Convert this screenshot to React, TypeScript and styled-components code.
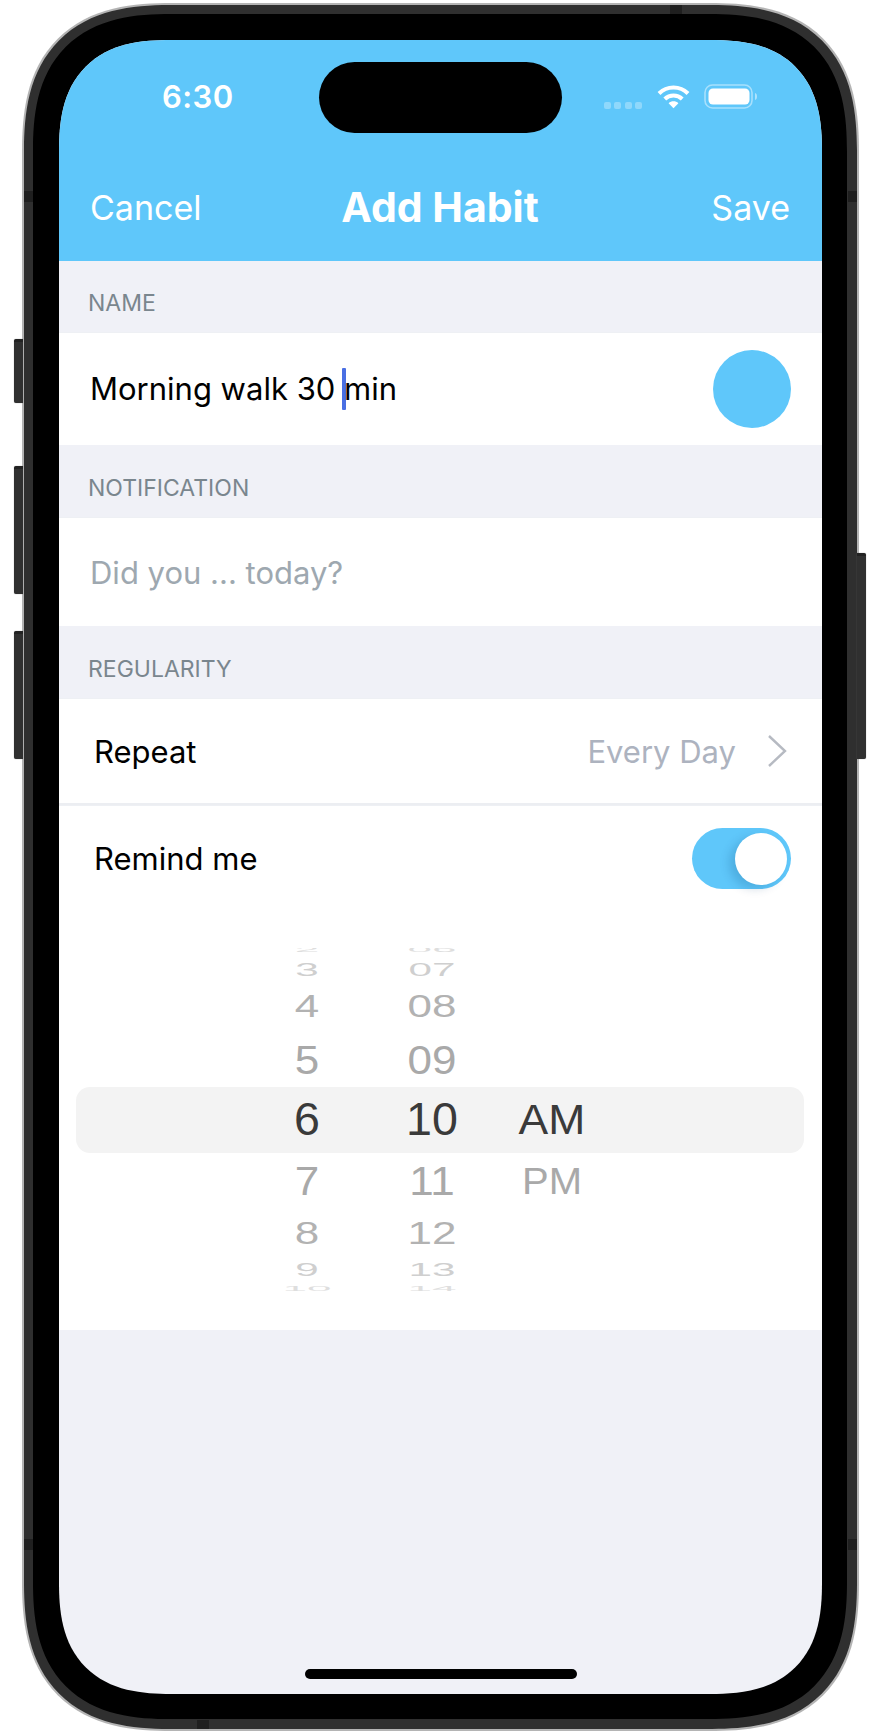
import React from "react";
import styled, { createGlobalStyle } from "styled-components";

const GlobalStyle = createGlobalStyle`
  html, body {
    margin: 0;
    padding: 0;
    background: #fff;
  }
  * {
    box-sizing: border-box;
  }
`;

const SKY = "#5fc7fa";
const PAPER = "#f0f1f7";

const Stage = styled.div`
  width: 880px;
  height: 1735px;
  padding: 3px 0 0 22px;
  overflow: hidden;
  font-family: Inter, "Liberation Sans", sans-serif;
`;

const Frame = styled.div`
  position: relative;
  width: 837px;
  height: 1728px;
  padding: 9px 10px 10px 9px;
  background: #2f2f2f;
  border: 2px solid #b4b4b4;
  border-radius: 150px;
  corner-shape: superellipse(1.35);
`;

const Bezel = styled.div`
  width: 814px;
  height: 1705px;
  padding: 26px 25px 25px 26px;
  background: #000;
  border-radius: 138px;
  corner-shape: superellipse(1.35);
`;

const Screen = styled.div`
  position: relative;
  display: flex;
  flex-direction: column;
  width: 763px;
  height: 1654px;
  background: ${PAPER};
  border-radius: 112px;
  corner-shape: superellipse(1.35);
  overflow: hidden;
`;

const SideButton = styled.div<{ $side: "left" | "right"; $top: number; $height: number }>`
  position: absolute;
  ${(p) => (p.$side === "left" ? "left: -10px;" : "right: -9px;")}
  top: ${(p) => p.$top}px;
  width: 9px;
  height: ${(p) => p.$height}px;
  background: #303030;
  border-top: 3px solid #222;
  border-radius: ${(p) => (p.$side === "left" ? "2px 0 0 2px" : "0 2px 2px 0")};
  box-shadow: 0 0 1px #777;
`;

const EdgeBand = styled.div<{ $edge: "left" | "right"; $top: number }>`
  position: absolute;
  ${(p) => p.$edge}: 0;
  top: ${(p) => p.$top}px;
  width: 9px;
  height: 11px;
  background: #1f1f1f;
`;

const RimBand = styled.div<{ $edge: "top" | "bottom"; $left: number }>`
  position: absolute;
  ${(p) => p.$edge}: 0;
  left: ${(p) => p.$left}px;
  width: 12px;
  height: 9px;
  background: #1f1f1f;
`;

const Island = styled.div`
  position: absolute;
  top: 22px;
  left: 260px;
  width: 243px;
  height: 71px;
  background: #000;
  border-radius: 36px;
`;

const HomeBar = styled.div`
  position: absolute;
  bottom: 15px;
  left: 246px;
  width: 272px;
  height: 10px;
  background: #000;
  border-radius: 5px;
`;

const Header = styled.header`
  flex: none;
  height: 221px;
  background: ${SKY};
  color: #fff;
`;

const StatusBar = styled.div`
  display: flex;
  align-items: center;
  justify-content: space-between;
  height: 113px;
  padding: 0 64px 0 103px;
`;

const Time = styled.span`
  font-size: 31px;
  font-weight: 600;
  letter-spacing: 0.4px;
`;

const StatusIcons = styled.div`
  display: flex;
  align-items: center;
  gap: 14px;
`;

const SignalDots = styled.div`
  display: flex;
  gap: 3.5px;
  margin: 18px 1px 0 0;
`;

const SignalDot = styled.span`
  width: 7px;
  height: 7px;
  border-radius: 2px;
  background: rgba(255, 255, 255, 0.3);
`;

const NavBar = styled.div`
  display: grid;
  grid-template-columns: 1fr auto 1fr;
  align-items: center;
  height: 108px;
  padding: 0 32px 0 31px;
`;

const NavAction = styled.span<{ $end?: boolean }>`
  font-size: 34px;
  font-weight: 400;
  text-align: ${(p) => (p.$end ? "right" : "left")};
`;

const NavTitle = styled.h1`
  margin: 0;
  font-size: 41px;
  font-weight: 700;
`;

const SectionLabel = styled.div<{ $height?: number }>`
  flex: none;
  display: flex;
  align-items: flex-end;
  height: ${(p) => p.$height ?? 72}px;
  padding: 0 0 15px 29px;
  font-size: 23px;
  line-height: 28px;
  color: #7a868e;
`;

const Row = styled.div<{ $height: number; $inset?: number; $divider?: boolean }>`
  flex: none;
  display: flex;
  align-items: center;
  justify-content: space-between;
  height: ${(p) => p.$height}px;
  padding: 0 31px 0 ${(p) => p.$inset ?? 31}px;
  background: #fff;
  border-top: 1px solid #eef0f4;
  border-bottom: ${(p) => (p.$divider ? "2px solid #eceef2" : "none")};
  font-size: 31px;
  color: #000;
`;

const NameText = styled.span`
  display: inline-block;
`;

const Caret = styled.span`
  display: inline-block;
  width: 4px;
  height: 42px;
  margin: 0 -2px 0 -2px;
  vertical-align: -10px;
  background: #4a6fe3;
  border-radius: 1px;
`;

const ColorDot = styled.span`
  width: 78px;
  height: 78px;
  border-radius: 50%;
  background: ${SKY};
`;

const Placeholder = styled.span`
  color: #9ea8b0;
`;

const RepeatValue = styled.span`
  display: flex;
  align-items: center;
  gap: 31px;
  margin-right: 4px;
  color: #adb3bf;
`;

const Toggle = styled.span`
  display: flex;
  align-items: center;
  justify-content: flex-end;
  width: 99px;
  height: 61px;
  padding-right: 4px;
  background: ${SKY};
  border-radius: 31px;
`;

const ToggleKnob = styled.span`
  width: 52px;
  height: 52px;
  background: #fff;
  border-radius: 50%;
  box-shadow: -6px 4px 10px rgba(0, 60, 110, 0.18);
`;

const PickerPanel = styled.div`
  position: relative;
  flex: none;
  height: 419px;
  padding-top: 37px;
  background: #fff;
`;

const Highlight = styled.div`
  position: absolute;
  top: 176px;
  left: 17px;
  width: 728px;
  height: 66px;
  background: #f3f3f3;
  border-radius: 14px;
`;

const Wheel = styled.div`
  position: relative;
  display: grid;
  grid-template-columns: 112px 138px 102px;
  justify-content: start;
  height: 343px;
  padding-left: 192px;
  overflow: hidden;
`;

const WheelColumn = styled.div`
  display: flex;
  flex-direction: column;
  margin-top: -4px;
`;

const WheelItem = styled.div<{ $height: number; $scaleX: number; $scaleY: number; $color: string }>`
  flex: none;
  display: flex;
  align-items: center;
  justify-content: center;
  height: ${(p) => p.$height}px;
  font-family: "Liberation Sans", Arial, sans-serif;
  font-size: 44px;
  line-height: 44px;
  color: ${(p) => p.$color};
  transform: scale(${(p) => p.$scaleX}, ${(p) => p.$scaleY});
`;

const Period = styled.span<{ $size: number }>`
  font-size: ${(p) => p.$size}px;
`;

const Filler = styled.div`
  flex: 1;
`;

const wheelSlots = [
  { height: 12, scaleX: 1, scaleY: 0.16, color: "#dedede" },
  { height: 27, scaleX: 0.96, scaleY: 0.42, color: "#cfcfcf" },
  { height: 47, scaleX: 1, scaleY: 0.7, color: "#b2b2b2" },
  { height: 60, scaleX: 1, scaleY: 0.92, color: "#a9a9a9" },
  { height: 60, scaleX: 1.06, scaleY: 1.03, color: "#3a3a3a" },
  { height: 62, scaleX: 1, scaleY: 0.92, color: "#a9a9a9" },
  { height: 42, scaleX: 1, scaleY: 0.7, color: "#b2b2b2" },
  { height: 31, scaleX: 0.96, scaleY: 0.42, color: "#cfcfcf" },
  { height: 8, scaleX: 1, scaleY: 0.16, color: "#dedede" },
];

const hours: React.ReactNode[] = ["2", "3", "4", "5", "6", "7", "8", "9", "10"];
const minutes: React.ReactNode[] = ["06", "07", "08", "09", "10", "11", "12", "13", "14"];
const periods: React.ReactNode[] = [
  "",
  "",
  "",
  "",
  <Period $size={42}>AM</Period>,
  <Period $size={40}>PM</Period>,
  "",
  "",
  "",
];

function Column({ values }: { values: React.ReactNode[] }) {
  return (
    <WheelColumn>
      {values.map((value, i) => (
        <WheelItem
          key={i}
          $height={wheelSlots[i].height}
          $scaleX={wheelSlots[i].scaleX}
          $scaleY={wheelSlots[i].scaleY}
          $color={wheelSlots[i].color}
        >
          {value}
        </WheelItem>
      ))}
    </WheelColumn>
  );
}

function WifiIcon() {
  return (
    <svg width="33" height="25" viewBox="0 0 33 25" fill="none">
      <path d="M2 9.5C10 1.5 23 1.5 31 9.5" stroke="#fff" strokeWidth="4" />
      <path d="M7.8 15C12.6 10.2 20.4 10.2 25.2 15" stroke="#fff" strokeWidth="4" />
      <path d="M11.6 19.2C14.3 16.6 18.7 16.6 21.4 19.2L16.5 24.2Z" fill="#fff" />
    </svg>
  );
}

function BatteryIcon() {
  return (
    <svg width="54" height="25" viewBox="0 0 54 25" fill="none">
      <rect x="1" y="1" width="47" height="23" rx="7.5" stroke="#fff" strokeOpacity="0.45" strokeWidth="1.6" />
      <rect x="4.5" y="4.5" width="41" height="16" rx="4.5" fill="#fff" />
      <path d="M51 9C52.5 9.6 53 10.8 53 12.5C53 14.2 52.5 15.4 51 16Z" fill="#fff" fillOpacity="0.5" />
    </svg>
  );
}

function ChevronIcon() {
  return (
    <svg width="20" height="34" viewBox="0 0 20 34" fill="none">
      <path d="M2 2L18 17L2 32" stroke="#b6bac2" strokeWidth="2.4" />
    </svg>
  );
}

export default function App() {
  return (
    <Stage>
      <GlobalStyle />
      <Frame>
        <SideButton $side="left" $top={334} $height={64} />
        <SideButton $side="left" $top={461} $height={128} />
        <SideButton $side="left" $top={626} $height={128} />
        <SideButton $side="right" $top={548} $height={206} />
        <Bezel>
          <Screen>
            <Island />
            <Header>
              <StatusBar>
                <Time>6:30</Time>
                <StatusIcons>
                  <SignalDots>
                    <SignalDot />
                    <SignalDot />
                    <SignalDot />
                    <SignalDot />
                  </SignalDots>
                  <WifiIcon />
                  <BatteryIcon />
                </StatusIcons>
              </StatusBar>
              <NavBar>
                <NavAction>Cancel</NavAction>
                <NavTitle>Add Habit</NavTitle>
                <NavAction $end>Save</NavAction>
              </NavBar>
            </Header>

            <SectionLabel $height={71}>NAME</SectionLabel>
            <Row $height={113}>
              <NameText>
                Morning walk 30 <Caret />min
              </NameText>
              <ColorDot />
            </Row>

            <SectionLabel>NOTIFICATION</SectionLabel>
            <Row $height={109}>
              <Placeholder>Did you ... today?</Placeholder>
            </Row>

            <SectionLabel>REGULARITY</SectionLabel>
            <Row $height={107} $inset={35} $divider>
              Repeat
              <RepeatValue>
                Every Day
                <ChevronIcon />
              </RepeatValue>
            </Row>
            <Row $height={106} $inset={35}>
              Remind me
              <Toggle>
                <ToggleKnob />
              </Toggle>
            </Row>

            <PickerPanel>
              <Highlight />
              <Wheel>
                <Column values={hours} />
                <Column values={minutes} />
                <Column values={periods} />
              </Wheel>
            </PickerPanel>
            <Filler />
            <HomeBar />
          </Screen>
        </Bezel>
        <EdgeBand $edge="left" $top={186} />
        <EdgeBand $edge="right" $top={186} />
        <EdgeBand $edge="left" $top={1534} />
        <EdgeBand $edge="right" $top={1534} />
        <RimBand $edge="top" $left={646} />
        <RimBand $edge="bottom" $left={173} />
      </Frame>
    </Stage>
  );
}
